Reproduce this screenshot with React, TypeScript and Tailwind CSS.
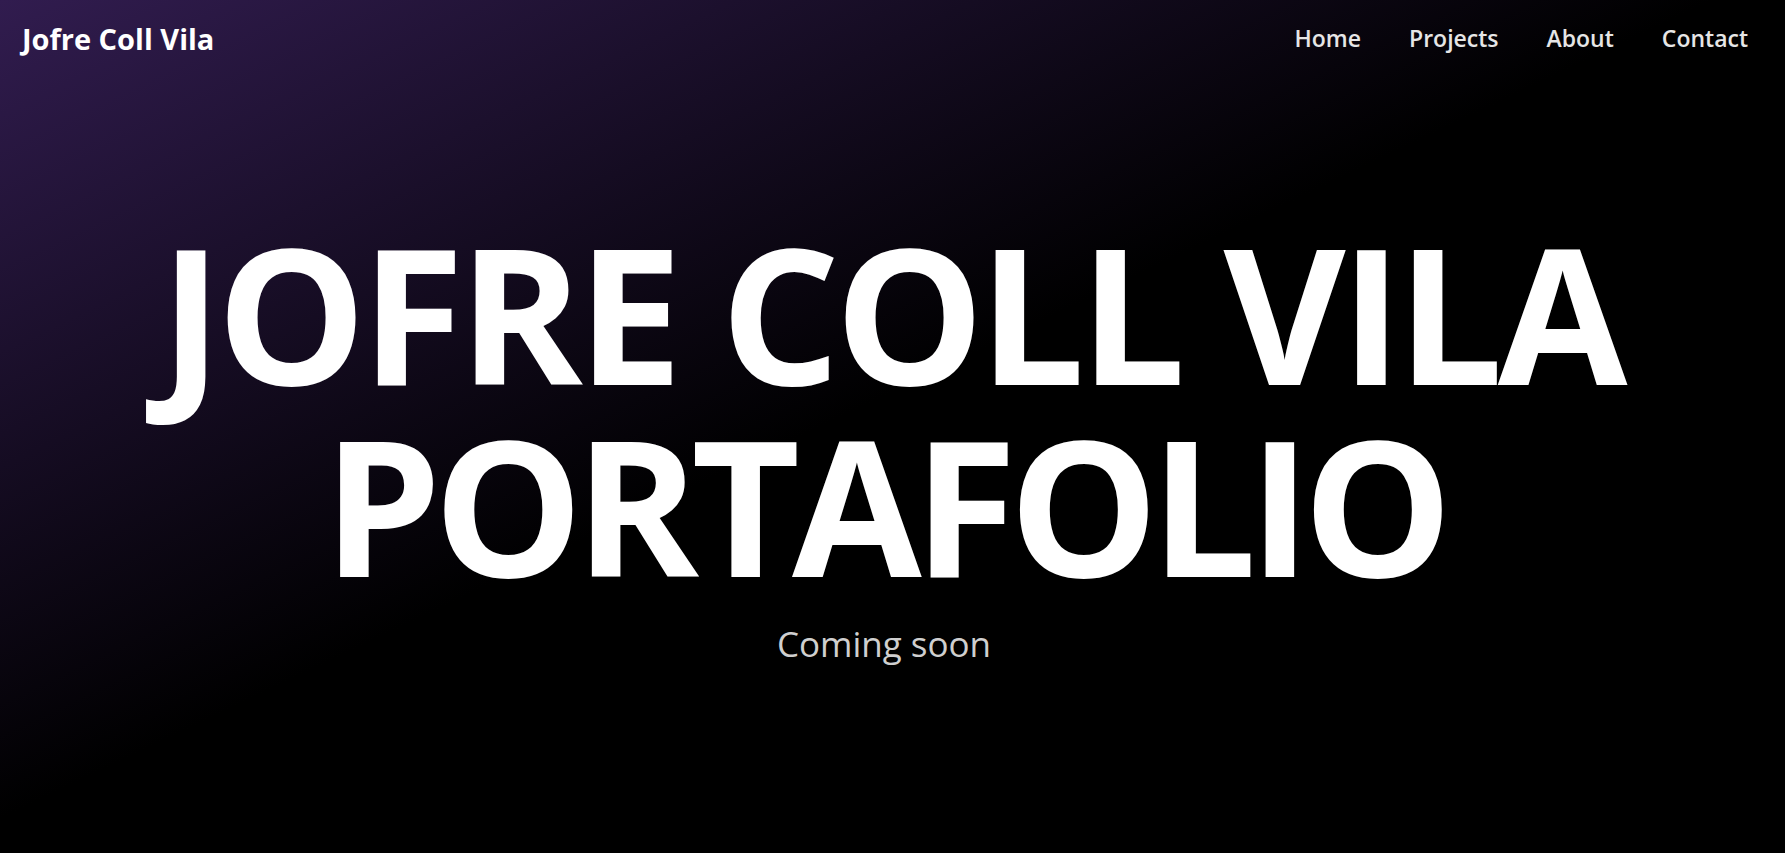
import React from "react";

export default function App() {
  return (
    <div
      className="min-h-screen w-full text-white bg-[linear-gradient(to_bottom_right,#311c4f_0%,#000_48%,#000_100%)]"
      style={{ fontFamily: '"Open Sans", "Noto Sans", sans-serif' }}
    >
      <div className="flex flex-col pr-[17px]">
        <header className="h-[76px] flex items-center justify-between pl-[22px] pr-5">
          <div className="text-[29px] font-bold leading-none text-white">Jofre Coll Vila</div>
          <nav className="flex items-center gap-12 text-[23px] font-semibold text-[#e6e6e6]">
            <a href="#">Home</a>
            <a href="#">Projects</a>
            <a href="#">About</a>
            <a href="#">Contact</a>
          </nav>
        </header>
        <main className="flex flex-col items-center pt-[140px]">
          <h1 className="flex flex-col items-center text-center font-bold text-white text-[188px] leading-[192px]">
            <span className="pl-[14px] tracking-[-5.5px]">JOFRE COLL VILA</span>
            <span className="tracking-[-8px]">PORTAFOLIO</span>
          </h1>
          <p className="mt-[18px] text-[35px] text-[#cfcfcf]">Coming soon</p>
        </main>
      </div>
    </div>
  );
}
